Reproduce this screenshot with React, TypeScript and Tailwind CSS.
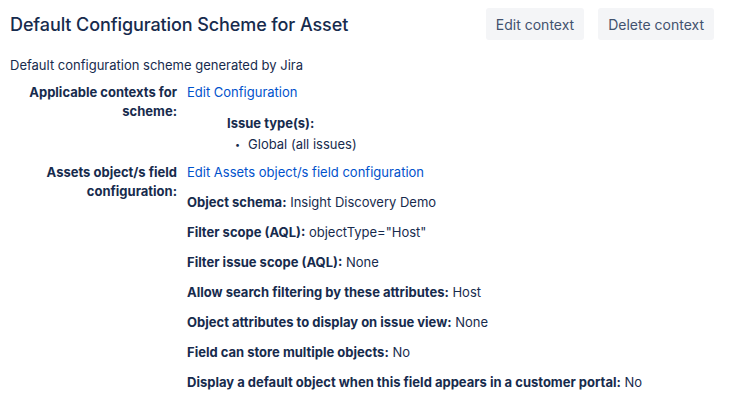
import React from "react";

const fields: { label: string; value: string }[] = [
  { label: "Object schema:", value: "Insight Discovery Demo" },
  { label: "Filter scope (AQL):", value: 'objectType="Host"' },
  { label: "Filter issue scope (AQL):", value: "None" },
  { label: "Allow search filtering by these attributes:", value: "Host" },
  { label: "Object attributes to display on issue view:", value: "None" },
  { label: "Field can store multiple objects:", value: "No" },
  { label: "Display a default object when this field appears in a customer portal:", value: "No" },
];

export default function App() {
  return (
    <div
      className="w-[734px] h-[401px] bg-white text-[#172b4d] px-[10px] overflow-hidden"
      style={{ fontFamily: 'Inter, "Noto Sans", "Liberation Sans", sans-serif' }}
    >
      {/* Header */}
      <div className="flex items-center justify-between h-[48px]">
        <h1 className="text-[18px] font-medium tracking-[-0.1px]">Default Configuration Scheme for Asset</h1>
        <div className="flex gap-[14px] mr-[10px]">
          <button className="h-8 px-[10px] rounded-[3px] bg-[#f4f5f7] text-[14px] text-[#42526e]">Edit context</button>
          <button className="h-8 px-[10px] rounded-[3px] bg-[#f4f5f7] text-[14px] text-[#42526e]">Delete context</button>
        </div>
      </div>

      <p className="text-[13px] leading-5 mt-[7px]">Default configuration scheme generated by Jira</p>

      {/* Details */}
      <div className="grid grid-cols-[167px_1fr] gap-x-[10px] text-[13px] leading-[19px] mt-[8px]">
        <div className="text-right font-bold">Applicable contexts for scheme:</div>
        <div>
          <a className="text-[#0052cc]">Edit Configuration</a>
          <div className="ml-[40px] mt-[12px]">
            <div className="font-bold">Issue type(s):</div>
            <ul className="mt-[2px] ml-[8px]">
              <li className="flex items-center gap-[8px]">
                <span className="text-[9px]">•</span>
                <span>Global (all issues)</span>
              </li>
            </ul>
          </div>
        </div>

        <div className="text-right font-bold mt-[9px]">Assets object/s field configuration:</div>
        <div className="mt-[9px]">
          <a className="text-[#0052cc]">Edit Assets object/s field configuration</a>
          <div className="flex flex-col gap-[11px] mt-[11px]">
            {fields.map((f) => (
              <div key={f.label}>
                <span className="font-bold">{f.label}</span> {f.value}
              </div>
            ))}
          </div>
        </div>
      </div>
    </div>
  );
}
